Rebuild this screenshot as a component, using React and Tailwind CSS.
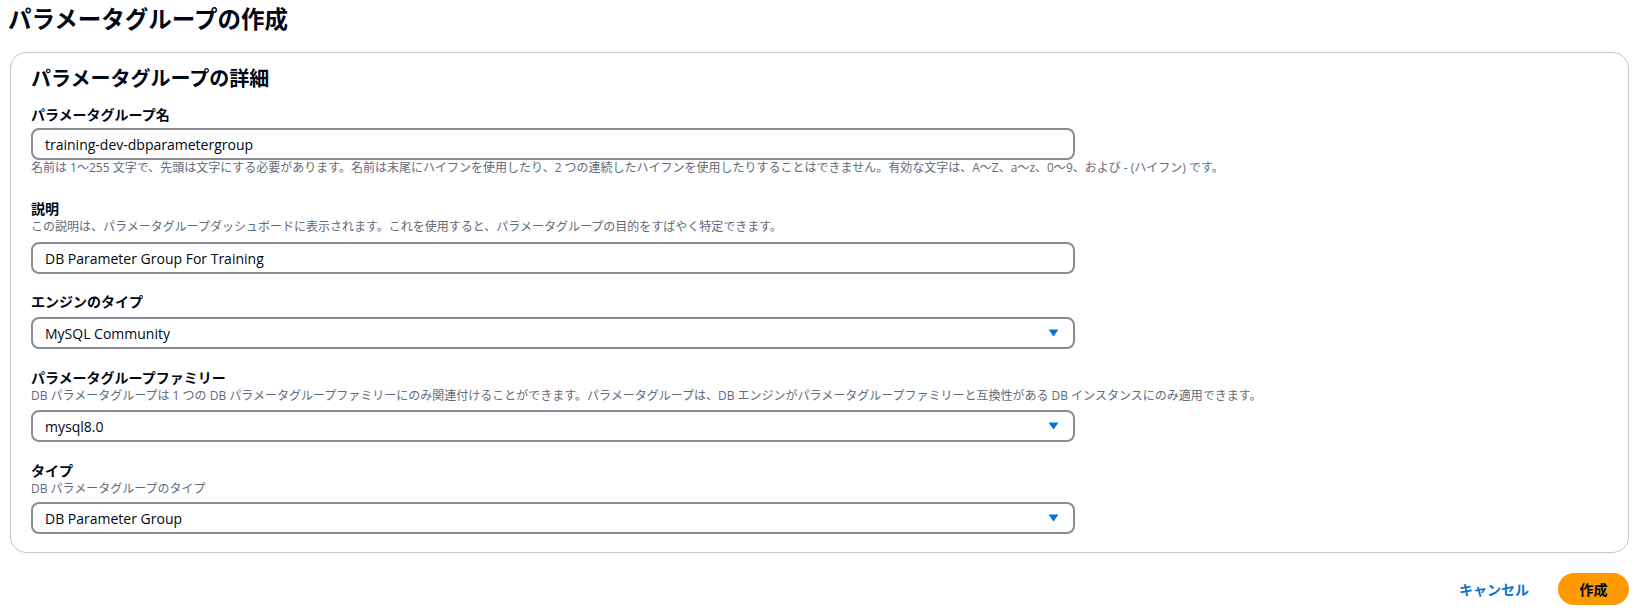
import { useState } from "react";

const Caret = () => (
  <svg width="11" height="8" viewBox="0 0 11 8" className="shrink-0">
    <path d="M0.5 0.5h10L5.5 7.5z" fill="#0972d3" />
  </svg>
);

function TextInput({ value }) {
  return (
    <div className="w-[1044px] h-[32px] rounded-[8px] border-2 border-[#8c8c94] bg-white px-[12px] flex items-center text-[14px] text-[#000716]">
      {value}
    </div>
  );
}

function SelectBox({ value }) {
  return (
    <div className="w-[1044px] h-[32px] rounded-[8px] border-2 border-[#8c8c94] bg-white pl-[12px] pr-[14px] flex items-center justify-between text-[14px] text-[#000716]">
      <span>{value}</span>
      <Caret />
    </div>
  );
}

function Label({ children }) {
  return <div className="text-[14px] leading-[20px] font-bold text-[#000716]">{children}</div>;
}

function Hint({ children }) {
  return <div className="text-[12px] leading-[16px] text-[#5f6b7a]">{children}</div>;
}

export default function App() {
  const [name] = useState("training-dev-dbparametergroup");

  return (
    <div className="w-[1639px] h-[610px] bg-white font-['Open_Sans','Noto_Sans_CJK_JP',sans-serif] text-[#000716]">
      <h1 className="pl-[8px] pt-[5px] text-[23.5px] leading-[28px] font-bold">パラメータグループの作成</h1>

      <div className="ml-[10px] mt-[19px] w-[1619px] rounded-[16px] border border-[#c6c6cd] pl-[20px] pt-[13px] pb-[18px]">
        <h2 className="text-[20px] leading-[26px] font-bold">パラメータグループの詳細</h2>

        <div className="mt-[13px]">
          <Label>パラメータグループ名</Label>
          <div className="mt-[3px]">
            <TextInput value={name} />
          </div>
          <Hint>
            名前は 1〜255 文字で、先頭は文字にする必要があります。名前は末尾にハイフンを使用したり、2 つの連続したハイフンを使用したりすることはできません。有効な文字は、A〜Z、a〜z、0〜9、および - (ハイフン) です。
          </Hint>
        </div>

        <div className="mt-[23px]">
          <Label>説明</Label>
          <Hint>この説明は、パラメータグループダッシュボードに表示されます。これを使用すると、パラメータグループの目的をすばやく特定できます。</Hint>
          <div className="mt-[7px]">
            <TextInput value="DB Parameter Group For Training" />
          </div>
        </div>

        <div className="mt-[18px]">
          <Label>エンジンのタイプ</Label>
          <div className="mt-[5px]">
            <SelectBox value="MySQL Community" />
          </div>
        </div>

        <div className="mt-[19px]">
          <Label>パラメータグループファミリー</Label>
          <Hint>DB パラメータグループは 1 つの DB パラメータグループファミリーにのみ関連付けることができます。パラメータグループは、DB エンジンがパラメータグループファミリーと互換性がある DB インスタンスにのみ適用できます。</Hint>
          <div className="mt-[6px]">
            <SelectBox value="mysql8.0" />
          </div>
        </div>

        <div className="mt-[19px]">
          <Label>タイプ</Label>
          <Hint>DB パラメータグループのタイプ</Hint>
          <div className="mt-[5px]">
            <SelectBox value="DB Parameter Group" />
          </div>
        </div>
      </div>

      <div className="w-[1629px] mt-[20px] flex items-center justify-end gap-[29px]">
        <button className="text-[14px] font-bold text-[#0972d3]">キャンセル</button>
        <button className="w-[71px] h-[32px] rounded-full bg-[#ff9900] text-[14px] font-bold text-[#000716]">作成</button>
      </div>
    </div>
  );
}
